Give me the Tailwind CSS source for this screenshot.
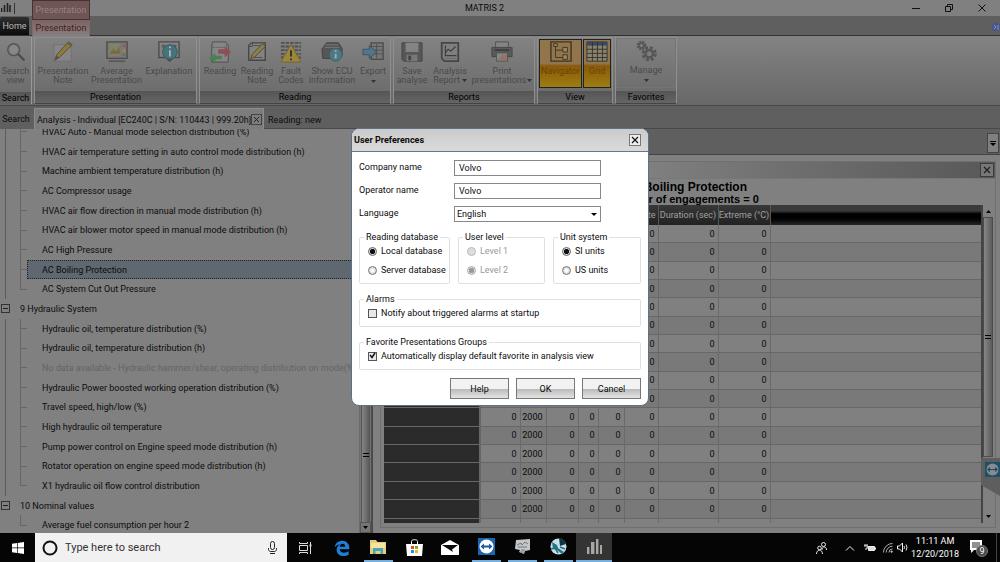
<!DOCTYPE html>
<html lang="en">
<head>
<meta charset="utf-8">
<title>MATRIS 2</title>
<script src="https://cdn.jsdelivr.net/npm/@tailwindcss/browser@4"></script>
</head>
<body class="flex h-screen flex-col overflow-hidden bg-[#808080] font-['Roboto','Noto_Sans',sans-serif] text-[9px] leading-3 text-[#0c0c0c]">

<div class="relative flex min-h-0 flex-1 flex-col">

  <!-- Title bar and ribbon tabs -->
  <header class="relative shrink-0">
    <div class="flex h-4 items-center bg-[#808080]">
      <svg class="ml-px h-3 w-4" viewBox="0 0 16 12" fill="none" stroke="#222"><path d="M.5 6v4M3.500 3v7M6.500 1v9M9 3v7" stroke-width="1.600"/><path d="M13.500 1v11" stroke="#333"/></svg>
      <h1 class="flex-1 pl-[32px] pr-[80px] text-center">MATRIS 2</h1>
    </div>
    <div class="flex h-5 items-end border-b border-[#333] bg-[#5f5f5f]">
      <button class="h-[18px] w-[29px] rounded-t-xs bg-linear-to-b from-[#303030] to-[#0c0c0c] text-[#b8b8b8]">Home</button>
    </div>
    <div class="absolute left-8 top-0 flex h-9 w-[58px] flex-col">
      <div class="flex h-5 items-center justify-center border border-[#4b3030] bg-[#6f5656] text-[#968282]">Presentation</div>
      <button class="flex-1 border-x border-[#866] bg-linear-to-b from-[#7c6262] to-[#848080] text-[#4c1a1a]">Presentation</button>
    </div>
    <div class="absolute right-0 top-0 flex h-[15px] items-center gap-[23px] pr-[13px]">
      <button aria-label="Minimize"><svg class="size-[10px]" viewBox="0 0 10 10" stroke="#111"><path d="M1 5.500h8"/></svg></button>
      <button aria-label="Restore"><svg class="size-[10px]" viewBox="0 0 10 10" stroke="#111" fill="none"><path d="M1.500 3.500h5v5h-5zM3.500 3V1.500h5v5H7"/></svg></button>
      <button aria-label="Close"><svg class="size-[10px]" viewBox="0 0 10 10" stroke="#111"><path d="M1.500 1.500l7 7M8.500 1.500l-7 7"/></svg></button>
    </div>
    <svg class="absolute right-0 top-[21px] h-3 w-[9px]" viewBox="0 0 9 12"><circle cx="5" cy="6" r="4" fill="#475590"/><path d="M3 4l2 2-2 2M7 4v5" stroke="#8a94b8" fill="none"/></svg>
  </header>

  <!-- Ribbon -->
  <nav class="flex h-[70px] shrink-0 gap-[2px] border-b border-[#484848] bg-linear-to-b from-[#838383] to-[#686868] py-px text-[#4a4a4a]" aria-label="Ribbon">
    <section class="flex w-8 flex-col border-r border-[#999]">
      <button class="flex flex-1 flex-col items-center pt-1 leading-[9px]">
        <svg class="mb-1 size-[22px] opacity-85" viewBox="0 0 24 24" fill="none"><circle cx="9.500" cy="9.500" r="6.500" stroke="#4c4c4c" stroke-width="1.500"/><circle cx="9.500" cy="9.500" r="4.500" fill="#8a8a8a"/><path d="M14.500 14.500l6 6" stroke="#444" stroke-width="2.500" stroke-linecap="round"/></svg>
        Search<br>view</button>
      <h2 class="h-3 bg-linear-to-b from-[#555] to-[#656565] text-center text-black">Search</h2>
    </section>

    <section class="flex w-[163px] flex-col border border-[#8f8f8f] border-b-[#444]">
      <div class="flex flex-1 justify-between px-[3px] pt-[3px] leading-[9px]">
        <button class="flex w-[50px] flex-col items-center">
          <svg class="mb-1 size-[22px] shrink-0 opacity-85" viewBox="0 0 24 24"><path d="M2 4h19v18H2z" fill="#888" stroke="#707070"/><path d="M3 21l2-6L18 1l4 3L8 18z" fill="#8f7b31" stroke="#4c4630"/><path d="M3 21l2-5 3 2z" fill="#4f4b3f"/><path d="M17 2l4 3" stroke="#654" stroke-width="2"/></svg>
          Presentation<br>Note</button>
        <button class="flex w-[50px] flex-col items-center">
          <svg class="mb-1 size-[22px] shrink-0 opacity-85" viewBox="0 0 24 24"><path d="M1 1h22v18H1z" fill="#777" stroke="#454545" stroke-width="1.500"/><path d="M3 3h12v13H3z" fill="#888263"/><path d="M4 14l4-6 3 3 4-5v8z" fill="#763"/><path d="M4 6h10M4 10h10" stroke="#686"/><path d="M18 4h3v3h-3z" fill="#955"/><path d="M18 9h3v3h-3z" fill="#aa8730"/><path d="M18 14h3v2h-3z" fill="#575"/><path d="M3 22h18" stroke="#555" stroke-width="2"/></svg>
          Average<br>Presentation</button>
        <button class="flex w-[48px] flex-col items-center">
          <svg class="mb-1 size-[22px] shrink-0 opacity-85" viewBox="0 0 24 24"><path d="M1 1h22v17H1z" fill="#858585" stroke="#444" stroke-width="1.500"/><path d="M4 4h4v3H4zM17 4h3v3h-3z" fill="#555"/><path d="M9 20l4 3 4-4z" fill="#444"/><circle cx="13" cy="12" r="8" fill="#3e727e" stroke="#2d525b"/><path d="M13 6v2M13 10v7" stroke="#b0bfc2" stroke-width="2"/></svg>
          Explanation</button>
      </div>
      <h2 class="h-3 bg-linear-to-b from-[#555] to-[#656565] text-center text-black">Presentation</h2>
    </section>

    <section class="flex w-[192px] flex-col border border-[#8f8f8f] border-b-[#444]">
      <div class="flex flex-1 justify-between px-[2px] pt-[3px] leading-[9px]">
        <button class="flex w-9 flex-col items-center">
          <svg class="mb-1 size-[22px] shrink-0 opacity-85" viewBox="0 0 24 24"><path d="M4 1h14l3 4v18H3V5z" fill="#888" stroke="#444"/><path d="M4 2v5h15V2" fill="none" stroke="#666"/><path d="M10 9h7V6l7 6-7 6v-4h-7z" fill="#914752"/><path d="M14 16H7v-3l-7 6 7 5v-4h7z" fill="#41814f"/></svg>
          Reading</button>
        <button class="flex w-9 flex-col items-center">
          <svg class="mb-1 size-[22px] shrink-0 opacity-85" viewBox="0 0 24 24"><path d="M6 2h15v19H3V5z" fill="#858585" stroke="#3d3d3d" stroke-width="1.500"/><path d="M3 6h4V2M8 5h11M7 18h11" stroke="#444" fill="none"/><path d="M5 20l2-6L18 3l3 3L10 17z" fill="#8f803f" stroke="#494329"/></svg>
          Reading<br>Note</button>
        <button class="flex w-[30px] flex-col items-center">
          <svg class="mb-1 size-[22px] shrink-0 opacity-85" viewBox="0 0 24 24"><path d="M1 2h22M1 6h22M1 10h22M1 14h22M1 18h22" stroke="#4a4a4a" stroke-width="2" stroke-dasharray="4 1"/><path d="M12 4l11 19H1z" fill="#a28a2e" stroke="#746323"/><path d="M12 10v7M12 19v2" stroke="#222" stroke-width="2"/></svg>
          Fault<br>Codes</button>
        <button class="flex w-[50px] flex-col items-center">
          <svg class="mb-1 size-[22px] shrink-0 opacity-85" viewBox="0 0 24 24"><path d="M1 9l5-7h13l4 6v8l-7 3H2z" fill="#505050" stroke="#383838"/><path d="M5 4h14M4 7h16" stroke="#777"/><circle cx="16" cy="15" r="7" fill="#467985" stroke="#315c66"/><path d="M16 10v2M16 14v5" stroke="#a8b7bb" stroke-width="2"/></svg>
          Show ECU<br>information</button>
        <button class="flex w-[30px] flex-col items-center">
          <svg class="mb-1 size-[22px] shrink-0 opacity-85" viewBox="0 0 24 24"><path d="M10 2h13v18H10z" fill="#777" stroke="#424242" stroke-width="1.500"/><path d="M11 6h11M11 10h11M11 14h11M16 3v16" stroke="#484848"/><path d="M1 9h7V5l8 7-8 7v-4H1z" fill="#4c7390" stroke="#304a61"/></svg>
          Export<svg class="mt-1 h-[3px] w-[5px]" viewBox="0 0 5 3"><path d="M0 0h5L2.500 3z" fill="#333"/></svg></button>
      </div>
      <h2 class="h-3 bg-linear-to-b from-[#555] to-[#656565] text-center text-black">Reading</h2>
    </section>

    <section class="flex w-[142px] flex-col border border-[#8f8f8f] border-b-[#444]">
      <div class="flex flex-1 justify-between px-[2px] pt-[3px] leading-[9px]">
        <button class="flex w-[32px] flex-col items-center">
          <svg class="mb-1 size-[22px] shrink-0 opacity-85" viewBox="0 0 24 24"><path d="M1 2h22v20H3l-2-2z" fill="#505050" stroke="#3d3d3d"/><path d="M5 2h14v10H5z" fill="#858585"/><path d="M6 15h12v7H6z" fill="#777"/><path d="M8 16h3v5H8z" fill="#3a3a3a"/></svg>
          Save<br>analyse</button>
        <button class="flex w-10 flex-col items-center">
          <svg class="mb-1 size-[22px] shrink-0 opacity-85" viewBox="0 0 24 24"><path d="M3 2h18v20H6l-3-3z" fill="#808080" stroke="#3d3d3d" stroke-width="2"/><path d="M7 5v11h12M7 13l3-4 3 2 5-5" fill="none" stroke="#333" stroke-width="1.300"/><path d="M6 19h13" stroke="#666"/></svg>
          Analysis<span class="flex items-center gap-[2px]">Report<svg class="h-[3px] w-[5px]" viewBox="0 0 5 3"><path d="M0 0h5L2.500 3z" fill="#333"/></svg></span></button>
        <button class="flex w-[60px] flex-col items-center">
          <svg class="mb-1 size-[22px] shrink-0 opacity-85" viewBox="0 0 24 24"><path d="M5 1h14v7H5z" fill="#858585" stroke="#484848"/><path d="M1 7h22v10H1z" fill="#555" stroke="#3c3c3c"/><path d="M4 10h16" stroke="#333" stroke-width="2"/><path d="M6 13h12v9H6z" fill="#888" stroke="#4c4c4c"/><path d="M8 21l4-6h5v6z" fill="#99725f"/></svg>
          Print<span class="flex items-center gap-px">presentations<svg class="h-[3px] w-[5px]" viewBox="0 0 5 3"><path d="M0 0h5L2.500 3z" fill="#333"/></svg></span></button>
      </div>
      <h2 class="h-3 bg-linear-to-b from-[#555] to-[#656565] text-center text-black">Reports</h2>
    </section>

    <section class="flex w-[76px] flex-col border border-[#8f8f8f] border-b-[#444]">
      <div class="flex flex-1 justify-between p-px pb-[3px] leading-[9px] text-[#6b4200]">
        <button class="flex w-[43px] flex-col items-center border border-[#222] bg-linear-to-b from-[#91754c] from-50% via-[#8a5a08] via-55% to-[#9c7d14] pt-px">
          <svg class="mb-1 size-[22px] shrink-0" viewBox="0 0 24 24" fill="none" stroke="#41341f"><path d="M1 1h22v21H1z" stroke-width="1.500"/><path d="M6 3v15h8M6 10h8"/><path d="M14 7h5v5h-5zM14 15h5v5h-5zM4 3h4v3H4z" fill="#988767"/></svg>
          Navigator</button>
        <button class="flex w-[28px] flex-col items-center border border-[#222] bg-linear-to-b from-[#91754c] from-50% via-[#8a5a08] via-55% to-[#9c7d14] pt-px">
          <svg class="mb-1 size-[22px] shrink-0" viewBox="0 0 24 24"><path d="M1 1h22v21H1z" fill="#8a8269" stroke="#333"/><path d="M1 1h22v4H1z" fill="#394b63"/><path d="M1 9h22M1 13.500h22M1 18h22M7 1v21M12.500 1v21M18 1v21" stroke="#333"/></svg>
          Grid</button>
      </div>
      <h2 class="h-3 bg-linear-to-b from-[#555] to-[#656565] text-center text-black">View</h2>
    </section>

    <section class="flex w-[62px] flex-col border border-[#8f8f8f] border-b-[#444]">
      <button class="mb-[3px] flex flex-1 flex-col items-center border border-[#747474] pt-px leading-[9px]">
        <svg class="mb-1 size-[22px] shrink-0 opacity-85" viewBox="0 0 24 24" fill="none" stroke="#505050"><circle cx="7" cy="6" r="4" stroke-width="2.500" stroke-dasharray="2.200 1"/><circle cx="7" cy="6" r="2.500" stroke-width="1.500"/><circle cx="15.500" cy="15" r="6.500" stroke-width="3.500" stroke-dasharray="3.100 2"/><circle cx="15.500" cy="15" r="4" stroke-width="2.500"/></svg>
        Manage<svg class="mt-1 h-[3px] w-[5px]" viewBox="0 0 5 3"><path d="M0 0h5L2.500 3z" fill="#333"/></svg></button>
      <h2 class="h-3 bg-linear-to-b from-[#555] to-[#656565] text-center text-black">Favorites</h2>
    </section>
  </nav>

  <!-- Document tabs -->
  <div class="flex h-[23px] shrink-0 items-end bg-[#5f5f5f]">
    <button class="h-5 w-[34px] pr-[2px] text-center">Search</button>
    <div class="flex h-[21px] w-[230px] items-center justify-between border border-b-0 border-[#8c8c8c] bg-[#7c7c7c] pl-[2px] pr-px pt-px">
      <span class="whitespace-nowrap">Analysis - Individual [EC240C | S/N: 110443 | 999.20h]</span>
      <button aria-label="Close tab" class="border border-[#444]"><svg class="size-[9px]" viewBox="0 0 9 9" stroke="#222"><path d="M2 2l5 5M7 2l-5 5"/></svg></button>
    </div>
    <div class="h-full flex-1 border-b border-[#484848] pl-1 pt-2"><button>Reading: new</button></div>
  </div>

  <!-- Workspace -->
  <main class="flex min-h-0 flex-1">
    <aside class="flex w-[373px] shrink-0 border-r-2 border-[#4a4a4a]">
      <div class="min-w-0 flex-1 overflow-hidden"><ul id="tree" class="-mt-[7px] flex h-[calc(100%+9px)] flex-col"></ul></div>
      <div class="flex w-[12px] flex-col border-l border-[#6c6c6c] bg-[#757575]" aria-hidden="true">
        <div class="mx-px flex flex-1 items-center justify-center border-x border-[#555] bg-linear-to-r from-[#858585] to-[#5c5c5c] pt-[258px]"><span class="h-1 w-[6px] border-y border-black"></span></div>
        <div class="flex h-[11px] items-center justify-center border border-[#555]"><svg class="h-[3px] w-[5px]" viewBox="0 0 5 3"><path d="M0 0h5L2.500 3z"/></svg></div>
      </div>
    </aside>

    <section class="flex min-w-0 flex-1 flex-col">
      <div class="flex h-[26px] items-end justify-end border-b border-[#444] bg-[#5f5f5f] pb-px pr-px">
        <button aria-label="More windows" class="flex h-5 w-3 items-center justify-center border border-[#444] bg-[#808080]"><svg class="h-[5px] w-[6px]" viewBox="0 0 6 5"><path d="M0 0h6v1H0zM0 2h6L3 5z"/></svg></button>
      </div>
      <div class="mx-1 mb-[5px] ml-[7px] mt-[6px] flex min-h-0 flex-1 flex-col border border-[#707070]">
        <div class="flex h-[17px] shrink-0 items-center justify-end border-b border-[#777] bg-linear-to-r from-[#828282] from-40% to-[#585858] pr-px">
          <button aria-label="Close panel" class="border border-[#3c3c3c] bg-[#777]"><svg class="size-[12px]" viewBox="0 0 12 12" stroke="#222" stroke-width="1.300"><path d="M3 3l6 6M9 3l-6 6"/></svg></button>
        </div>
        <div class="h-[26px] shrink-0 pr-[6px] pt-[2px] text-center font-['Liberation_Sans',sans-serif] font-bold text-black">
          <h2 class="text-[12px] leading-[13px]">AC Boiling Protection</h2>
          <p class="text-[11px] leading-[11px]">Number of engagements = 0</p>
        </div>
        <div class="mb-1 ml-[3px] mr-[2px] flex min-h-0 flex-1">
          <div class="min-w-0 flex-1 overflow-hidden">
            <table class="h-[calc(100%+14px)] w-full table-fixed border-collapse">
              <colgroup><col class="w-[96px]"><col class="w-[40px]"><col class="w-[26px]"><col class="w-[32px]"><col class="w-[20px]"><col class="w-[26px]"><col class="w-[34px]"><col class="w-[60px]"><col class="w-[52px]"><col></colgroup>
              <thead class="bg-linear-to-b from-[#383838] to-[#222] text-[#a0a0a0]">
                <tr class="h-[20px]">
                  <th></th><th></th><th></th><th></th><th></th><th></th>
                  <th class="border-r border-[#555] p-0 pr-[2px] text-right font-normal">Date</th>
                  <th class="whitespace-nowrap border-r border-[#555] p-0 text-center font-normal">Duration (sec)</th>
                  <th class="whitespace-nowrap border-r border-[#555] p-0 text-center font-normal">Extreme (°C)</th>
                  <th class="bg-linear-to-b from-[#3a3a3a] from-30% via-black via-50% to-[#262626]"></th>
                </tr>
              </thead>
              <tbody id="rows"></tbody>
            </table>
          </div>
          <div class="flex w-3 flex-col border-l-2 border-[#444]" aria-hidden="true">
            <div class="flex h-3 items-center justify-center"><svg class="h-[3px] w-[5px]" viewBox="0 0 5 3"><path d="M0 3h5L2.500 0z"/></svg></div>
            <div class="flex h-[240px] items-center justify-center border border-[#4c4c4c] bg-linear-to-r from-[#868686] to-[#5c5c5c]"><span class="h-1 w-[6px] border-y border-black"></span></div>
            <div class="flex flex-1 items-end justify-center pb-[5px]"><svg class="h-[3px] w-[5px]" viewBox="0 0 5 3"><path d="M0 0h5L2.500 3z"/></svg></div>
          </div>
        </div>
      </div>
    </section>
  </main>

  <!-- Remote-support side tab -->
  <svg class="absolute bottom-[36px] right-0 h-[40px] w-[19px]" viewBox="0 0 19 40"><path d="M0 1h19v38L0 28z" fill="#5e5e5e"/><path d="M4 5h15v15H4z" fill="#1b5068"/><circle cx="11.500" cy="12.500" r="6" fill="#858b8e"/><path d="M6 12.500l3-2.500v2h5v-2l3 2.500-3 2.500v-2H9v2z" fill="#1b4a60"/></svg>

  <!-- User preferences dialog -->
  <div class="absolute inset-0 flex items-center justify-center pt-px">
    <form role="dialog" aria-labelledby="dlg" class="w-[298px] overflow-hidden rounded-lg border border-[#5b7288] bg-white">
      <div class="flex h-[23px] items-center justify-between border-b border-[#5b7a98] bg-linear-to-b from-[#cbcbcb] to-[#dadada] pl-[2px] pr-[7px]">
        <h2 id="dlg" class="font-bold">User Preferences</h2>
        <button type="button" aria-label="Close" class="border border-[#777] bg-[#eee]"><svg class="size-[10px]" viewBox="0 0 10 10" stroke="#111" stroke-width="1.200"><path d="M2 2l6 6M8 2l-6 6"/></svg></button>
      </div>
      <div class="px-[7px] pb-[6px] pt-2">
        <div class="grid grid-cols-[95px_147px] gap-y-[7px]">
          <label for="company" class="pt-px">Company name</label><input id="company" value="Volvo" class="h-4 border border-[#888] pl-1">
          <label for="operator" class="pt-px">Operator name</label><input id="operator" value="Volvo" class="h-4 border border-[#888] pl-1">
          <label for="language" class="pt-px">Language</label>
          <div class="relative flex">
            <select id="language" class="h-4 flex-1 appearance-none border border-[#888] bg-white pl-[2px]"><option>English</option></select>
            <svg class="pointer-events-none absolute right-1 top-[7px] h-[3px] w-[6px]" viewBox="0 0 6 3"><path d="M0 0h6L3 3z"/></svg>
          </div>
        </div>
        <div class="mt-[9px] flex gap-2">
          <fieldset class="w-[91px] rounded-xs border border-[#e0e0e0] pb-[7px] pl-2">
            <legend class="-ml-1 px-[2px]">Reading database</legend>
            <div class="flex flex-col gap-[7px] pt-[2px]">
              <label class="flex items-center gap-1"><input type="radio" name="db" checked class="size-[9px] appearance-none rounded-full border border-[#666] bg-[#ddd] checked:bg-[radial-gradient(#111_45%,#ddd_60%)]">Local database</label>
              <label class="flex items-center gap-1"><input type="radio" name="db" class="size-[9px] appearance-none rounded-full border border-[#777] bg-[radial-gradient(#fff_20%,#bbb)]">Server database</label>
            </div>
          </fieldset>
          <fieldset disabled class="w-[87px] rounded-xs border border-[#e0e0e0] pb-[7px] pl-2">
            <legend class="-ml-1 px-[2px]">User level</legend>
            <div class="flex flex-col gap-[7px] pt-[2px] text-[#999]">
              <label class="flex items-center gap-1"><input type="radio" name="lvl" class="size-[9px] appearance-none rounded-full border border-[#bbb] bg-[#ddd]">Level 1</label>
              <label class="flex items-center gap-1"><input type="radio" name="lvl" checked class="size-[9px] appearance-none rounded-full border border-[#aaa] bg-[radial-gradient(#999_45%,#ddd_60%)]">Level 2</label>
            </div>
          </fieldset>
          <fieldset class="flex-1 rounded-xs border border-[#e0e0e0] pb-[7px] pl-2">
            <legend class="-ml-1 px-[2px]">Unit system</legend>
            <div class="flex flex-col gap-[7px] pt-[2px]">
              <label class="flex items-center gap-1"><input type="radio" name="unit" checked class="size-[9px] appearance-none rounded-full border border-[#666] bg-[#ddd] checked:bg-[radial-gradient(#111_45%,#ddd_60%)]">SI units</label>
              <label class="flex items-center gap-1"><input type="radio" name="unit" class="size-[9px] appearance-none rounded-full border border-[#777] bg-[radial-gradient(#fff_20%,#bbb)]">US units</label>
            </div>
          </fieldset>
        </div>
        <fieldset class="mt-[9px] rounded-xs border border-[#e0e0e0] pb-[7px] pl-2">
          <legend class="-ml-1 px-[2px]">Alarms</legend>
          <label class="flex items-center gap-1 pt-[2px]"><input type="checkbox" class="size-[9px] appearance-none border border-[#555] bg-[#e8e8e8]">Notify about triggered alarms at startup</label>
        </fieldset>
        <fieldset class="mt-[9px] rounded-xs border border-[#e0e0e0] pb-[7px] pl-2">
          <legend class="-ml-1 px-[2px]">Favorite Presentations Groups</legend>
          <div class="relative pt-[2px]">
            <label class="flex items-center gap-1"><input type="checkbox" checked class="size-[9px] appearance-none border border-[#555] bg-[#e8e8e8]">Automatically display default favorite in analysis view</label>
            <svg class="pointer-events-none absolute left-0 top-[3px] size-[9px]" viewBox="0 0 9 9" fill="none" stroke="#111" stroke-width="1.500"><path d="M2 4l2 2.500L7 2"/></svg>
          </div>
        </fieldset>
        <div class="mt-2 flex justify-end gap-[7px]">
          <button type="button" class="h-[21px] w-[59px] border border-[#777] bg-linear-to-b from-[#f2f2f2] from-50% via-[#bcbcbc] via-55% to-[#e4e4e4]">Help</button>
          <button type="button" class="h-[21px] w-[59px] border border-[#777] bg-linear-to-b from-[#f2f2f2] from-50% via-[#bcbcbc] via-55% to-[#e4e4e4]">OK</button>
          <button type="button" class="h-[21px] w-[59px] border border-[#777] bg-linear-to-b from-[#f2f2f2] from-50% via-[#bcbcbc] via-55% to-[#e4e4e4]">Cancel</button>
        </div>
      </div>
    </form>
  </div>
</div>

<!-- Taskbar -->
<footer class="flex h-[29px] shrink-0 items-stretch bg-[#050505] text-white">
  <button aria-label="Start" class="flex w-[35px] items-center justify-center"><svg class="size-3" viewBox="0 0 12 12" fill="#fff"><path d="M0 1.700l5-.7v4.600H0zM5.700.9L12 0v5.600H5.700zM0 6.300h5V11l-5-.7zM5.700 6.300H12V12l-6.300-.9z"/></svg></button>
  <div class="flex w-[252px] items-center bg-[#f1f1f1] pl-[7px] pr-[10px]">
    <svg class="size-4" viewBox="0 0 16 16" fill="none" stroke="#111" stroke-width="2"><circle cx="8" cy="8" r="6.500"/></svg>
    <input aria-label="Search" placeholder="Type here to search" class="ml-[7px] min-w-0 flex-1 text-[11px] placeholder:text-[#333]">
    <svg class="h-[13px] w-[9px]" viewBox="0 0 9 13" fill="none" stroke="#222"><rect x="2.500" y=".5" width="4" height="8" rx="2"/><path d="M.5 7v1.500c0 1 1 2 2 2h4c1 0 2-1 2-2V7M2 12.500h5"/></svg>
  </div>
  <button aria-label="Task view" class="flex w-9 items-center justify-center"><svg class="h-3 w-[13px]" viewBox="0 0 13 12" fill="none" stroke="#ddd"><path d="M.5 0v1.500h8V0M.5 12v-1.500h8V12M.5 3.500h8v5h-8zM11.500 0v12"/><path d="M10.500 3.500h2" stroke-width="2"/></svg></button>
  <button aria-label="Edge" class="flex w-[37px] items-center justify-center"><svg class="size-4" viewBox="0 0 24 24"><path d="M1 11C2 4 7 1 12.500 1 19 1 23 6 23 11.500V14H8.500c.3 3.500 3 5 6.500 5 2.500 0 5-.7 7-2v5c-2 1.200-5 2-8 2C7.500 24 4 20 4 15c0-4 2-7 6-9-3 .5-6.500 2-9 5zm7.600-1h8.200c0-3-1.300-4.500-3.900-4.500-2.500 0-4 2-4.300 4.500z" fill="#1e7fd6"/></svg></button>
  <button aria-label="File Explorer" class="flex w-9 items-center justify-center"><span class="flex h-full w-[29px] items-center justify-center border-b-2 border-[#76b0e0]"><svg class="size-4" viewBox="0 0 16 16"><path d="M0 1h6l1.500 2H16v12H0z" fill="#e6cd78"/><path d="M1 4h14v5H1z" fill="#f5e3a0"/><path d="M3 9h10v6h-2.500v-3h-5v3H3z" fill="#4aa3b8"/></svg></span></button>
  <button aria-label="Store" class="flex w-9 items-center justify-center"><svg class="h-[17px] w-[17px]" viewBox="0 0 17 17"><path d="M5.500 5V2.500C5.500 1 7 .7 8.500.7s3 .3 3 1.800V5" fill="none" stroke="#fff"/><path d="M0 5h17l-1 12H1z" fill="#fff"/><path d="M5 7h3v3H5z" fill="#e64b29"/><path d="M9 7h3v3H9z" fill="#78b21c"/><path d="M5 11h3v3H5z" fill="#1e93dc"/><path d="M9 11h3v3H9z" fill="#f0b416"/></svg></button>
  <button aria-label="Mail" class="flex w-9 items-center justify-center"><svg class="h-[15px] w-[18px]" viewBox="0 0 18 15"><path d="M0 5l9-5 9 5v10H0z" fill="#fff"/><path d="M1 5h16l-6 4.500 1 2.500-4-2.500z" fill="#0a0a0a"/></svg></button>
  <button aria-label="TeamViewer" class="flex w-9 items-center justify-center"><span class="flex h-full w-[29px] items-center justify-center border-b-2 border-[#76b0e0]"><svg class="size-[17px]" viewBox="0 0 17 17"><path d="M0 0h17v17H0z" fill="#1a66b0"/><circle cx="8.500" cy="8.500" r="7" fill="#fff"/><path d="M2.500 8.500L6 5.500v2h5v-2l3.500 3-3.500 3v-2H6v2z" fill="#1a5ba3"/></svg></span></button>
  <button aria-label="Service tool" class="flex w-9 items-center justify-center"><span class="flex h-full w-[29px] items-center justify-center border-b-2 border-[#76b0e0]"><svg class="size-[17px]" viewBox="0 0 17 17"><path d="M2 2l14-1v11l-5 1-1 3-5-2 1-2-5-1z" fill="#c4c7c9"/><path d="M3 7l4-2 1 2 3-3 3 2M4 9h9" stroke="#727678" fill="none"/><path d="M7 12h4M6 14h4" stroke="#777"/></svg></span></button>
  <button aria-label="Diagnostics" class="flex w-9 items-center justify-center"><span class="flex h-full w-[29px] items-center justify-center border-b-2 border-[#76b0e0]"><svg class="size-[17px]" viewBox="0 0 17 17"><circle cx="8.500" cy="8.500" r="8" fill="#c9e1e8"/><path d="M9 0a8 8 0 0 1 7 6l-6 2z" fill="#16323e"/><path d="M2 4l5 3 1 3 6 4-2 2-5-4-4-1z" fill="#247589"/><path d="M1 11l4-1 3 5M10 9l5 2" stroke="#2b6f83" fill="none" stroke-width="1.500"/></svg></span></button>
  <button aria-label="MATRIS" class="flex w-[36px] items-center justify-center border-b-2 border-[#76b0e0] bg-[#343434]"><svg class="h-4 w-[15px]" viewBox="0 0 15 16"><path d="M0 8h2v7H0zM4 3h3v12H4zM9 0h2v15H9zM13 6h2v9h-2z" fill="#aaa79c"/><path d="M2 8h1v7H2zM7 3h1v12H7zM11 0h1v15h-1z" fill="#5c6270"/></svg></button>
  <div class="ml-auto flex items-center pr-[3px]">
    <svg class="mr-[18px] h-3 w-[11px]" viewBox="0 0 11 12" fill="none" stroke="#eee"><circle cx="7.500" cy="2.500" r="2"/><path d="M6 8c0-4 4.500-4 4.500 0"/><circle cx="3.500" cy="6" r="1.800"/><path d="M.5 12c0-5 6-5 6 0"/></svg>
    <svg class="mr-[9px] h-[6px] w-[10px]" viewBox="0 0 10 6" fill="none" stroke="#eee"><path d="M1 5.500l4-4 4 4"/></svg>
    <svg class="mr-[7px] h-2 w-[12px]" viewBox="0 0 12 8"><path d="M1 0v2M3 0v2M0 2h4v2H2v2" stroke="#eee" fill="none"/><path d="M4.500 2.500h6v4h-6z" fill="#ddd" stroke="#eee"/><path d="M11 3.500h1v2h-1z" fill="#eee"/></svg>
    <svg class="mr-[4px] size-[10px]" viewBox="0 0 11 11" fill="none" stroke="#bbb"><path d="M.5 10.500a10 10 0 0 1 10-10M3.500 10.500a7 7 0 0 1 7-7M6.500 10.500a4 4 0 0 1 4-4"/><circle cx="9.500" cy="9.500" r=".8" fill="#fff"/></svg>
    <svg class="mr-[3px] size-[11px]" viewBox="0 0 11 11" fill="none" stroke="#eee"><path d="M.5 4h2L5.500 1v9l-3-3h-2zM7 4q1 1.500 0 3M9 2.500q2 3 0 6"/></svg>
    <div class="text-center leading-[13px]"><time class="block">11:11 AM</time><time class="block">12/20/2018</time></div>
    <button aria-label="9 notifications" class="ml-[11px] mr-[8px]"><svg class="h-[18px] w-[18px]" viewBox="0 0 18 18"><path d="M0 1h12v10H4l-3 3v-3H0z" fill="#fff"/><path d="M2 4h8M2 6h8M2 8h6" stroke="#222"/><circle cx="12" cy="12" r="5.500" fill="#4a4a4a" stroke="#777"/><text x="12" y="15" text-anchor="middle" font-size="9" fill="#fff">9</text></svg></button>
    <span class="h-[29px] w-px bg-[#444]"></span>
  </div>
</footer>

<script>
const items = [
  'HVAC Auto - Manual mode selection distribution (%)',
  'HVAC air temperature setting in auto control mode distribution (h)',
  'Machine ambient temperature distribution (h)',
  'AC Compressor usage',
  'HVAC air flow direction in manual mode distribution (h)',
  'HVAC air blower motor speed in manual mode distribution (h)',
  'AC High Pressure',
  'AC Boiling Protection',
  'AC System Cut Out Pressure',
  '9 Hydraulic System',
  'Hydraulic oil, temperature distribution (%)',
  'Hydraulic oil, temperature distribution (h)',
  'No data available - Hydraulic hammer/shear, operating distribution on mode(%)',
  'Hydraulic Power boosted working operation distribution (%)',
  'Travel speed, high/low (%)',
  'High hydraulic oil temperature',
  'Pump power control on Engine speed mode distribution (h)',
  'Rotator operation on engine speed mode distribution (h)',
  'X1 hydraulic oil flow control distribution',
  '10 Nominal values',
  'Average fuel consumption per hour 2',
];
const isGroup = t => /^\d/.test(t);
document.getElementById('tree').innerHTML = items.map((t, i) => {
  if (isGroup(t)) {
    return `<li class="flex flex-1 items-center"><button aria-label="Collapse" class="ml-px flex size-[9px] items-center justify-center border border-[#333] bg-[#808080]"><span class="h-px w-[5px] bg-[#222]"></span></button><span class="ml-[10px]">${t}</span></li>`;
  }
  const last = i === items.length - 1 || isGroup(items[i + 1]);
  const outer = i === items.length - 1 ? 'ml-[5px] w-[15px]' : 'ml-[5px] w-[15px] border-l border-[#5c5c5c]';
  const lower = last ? 'flex-1' : 'flex-1 border-l border-[#666]';
  let text = 'flex min-w-0 flex-1 items-center whitespace-nowrap border border-transparent pl-[14px]';
  if (t.startsWith('AC Boiling')) text = 'flex min-w-0 flex-1 items-center whitespace-nowrap border border-dotted border-[#222] bg-[#5f6771] pl-[14px]';
  if (t.startsWith('No data')) text = 'flex min-w-0 flex-1 items-center whitespace-nowrap border border-transparent pl-[14px] text-[#646464]';
  return `<li class="flex flex-1"><span class="shrink-0 ${outer}"></span><span class="flex w-[7px] shrink-0 flex-col"><span class="flex-1 border-b border-l border-[#666]"></span><span class="${lower}"></span></span><a href="#" class="${text}">${t}</a></li>`;
}).join('');

const cells = ['0', '2000', '0', '0', '0', '0', '0', '0'];
document.getElementById('rows').innerHTML = Array.from({ length: 17 }, () =>
  `<tr class="border-b border-[#676767] even:bg-[#797979]"><th class="border-r-2 border-[#676767] bg-[#2b2b2b]"></th>${cells.map(c => `<td class="border-r border-[#6a6a6a] p-0 pr-[3px] text-right">${c}</td>`).join('')}<td></td></tr>`
).join('');
</script>
</body>
</html>
